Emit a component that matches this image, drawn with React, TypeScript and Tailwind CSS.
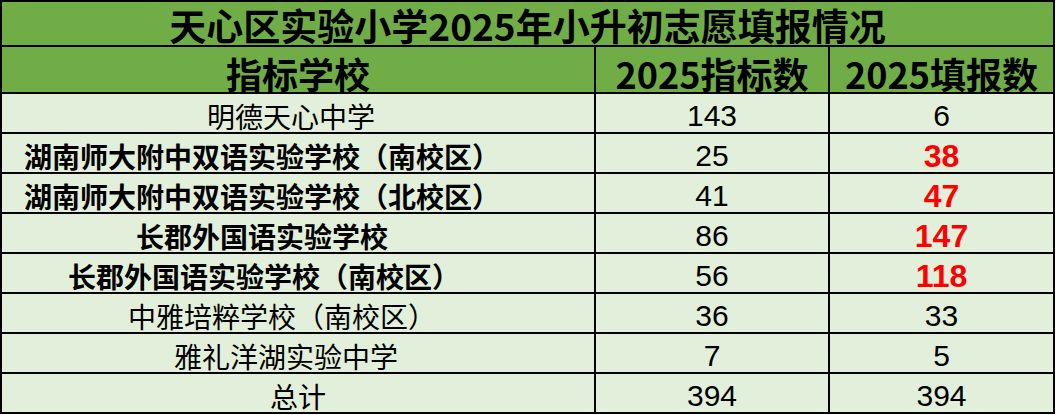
import React from "react";

type Row = {
  name: string;
  quota: string;
  filled: string;
  bold?: boolean;
  pad: string;
};

const rows: Row[] = [
  { name: "明德天心中学", quota: "143", filled: "6", pad: "pr-[14px]" },
  { name: "湖南师大附中双语实验学校（南校区）", quota: "25", filled: "38", bold: true, pad: "pr-[72px]" },
  { name: "湖南师大附中双语实验学校（北校区）", quota: "41", filled: "47", bold: true, pad: "pr-[72px]" },
  { name: "长郡外国语实验学校", quota: "86", filled: "147", bold: true, pad: "pr-[72px]" },
  { name: "长郡外国语实验学校（南校区）", quota: "56", filled: "118", bold: true, pad: "pr-[68px]" },
  { name: "中雅培粹学校（南校区）", quota: "36", filled: "33", pad: "pr-[32px]" },
  { name: "雅礼洋湖实验中学", quota: "7", filled: "5", pad: "pr-[24px]" },
  { name: "总计", quota: "394", filled: "394", pad: "pr-0" },
];

const cjk = "font-['Noto_Sans_CJK_SC',sans-serif]";
const num = "font-['Liberation_Sans','Noto_Sans_CJK_SC',sans-serif]";

export default function App() {
  return (
    <div className="h-[415px] w-[1057px] bg-white">
      <div className={`w-[1055px] border-l-2 border-t-2 border-black text-black ${cjk}`}>
        <div className="flex h-[45px] items-center justify-center border-b-2 border-r-2 border-black bg-[#70ad47] pt-[3px] text-[37px] font-bold leading-none">
          天心区实验小学2025年小升初志愿填报情况
        </div>
        <div className="grid h-[47px] grid-cols-[594px_234px_225px] bg-[#70ad47] text-[36px] font-bold leading-none">
          <div className="flex items-center justify-center border-b-2 border-r-2 border-black pt-[6px]">指标学校</div>
          <div className="flex items-center justify-center border-b-2 border-r-2 border-black pt-[6px]">2025指标数</div>
          <div className="flex items-center justify-center border-b-2 border-r-2 border-black pt-[6px]">2025填报数</div>
        </div>
        {rows.map((r) => (
          <div key={r.name} className="grid h-[40px] grid-cols-[594px_234px_225px] bg-[#e2efda] leading-none">
            <div
              className={`flex items-center justify-center border-b-2 border-r-2 border-black pt-[5px] text-[28px] ${r.pad} ${
                r.bold ? "font-bold" : "font-normal"
              }`}
            >
              {r.name}
            </div>
            <div className={`flex items-center justify-center border-b-2 border-r-2 border-black pt-[5px] text-[30px] ${num}`}>
              {r.quota}
            </div>
            <div
              className={`flex items-center justify-center border-b-2 border-r-2 border-black pt-[5px] ${num} ${
                r.bold ? "text-[32px] font-bold text-[#ff0000]" : "text-[30px]"
              }`}
            >
              {r.filled}
            </div>
          </div>
        ))}
      </div>
    </div>
  );
}
